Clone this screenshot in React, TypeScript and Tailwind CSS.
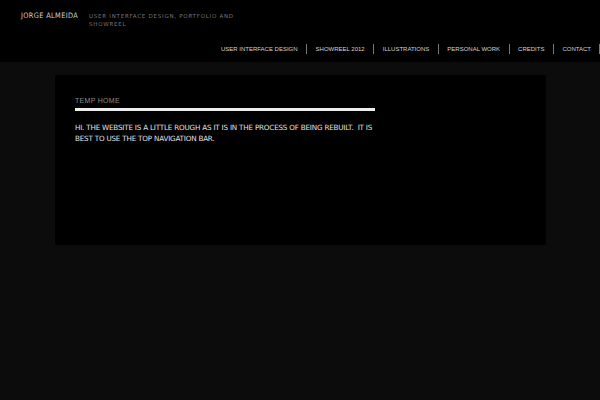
const navItems = [
  'USER INTERFACE DESIGN',
  'SHOWREEL 2012',
  'ILLUSTRATIONS',
  'PERSONAL WORK',
  'CREDITS',
  'CONTACT',
];

export default function App() {
  return (
    <div className="w-[600px] h-[400px] overflow-hidden bg-[#0c0c0c] font-['Liberation_Sans',sans-serif]">
      <header className="h-[62px] bg-black flex flex-col">
        <div className="flex pl-[21px] pt-[11px] gap-[14px]">
          <h1 className="text-[7.5px] leading-[10px] text-[#d0d0d0] tracking-[0.4px] whitespace-nowrap font-['DejaVu_Sans',sans-serif] scale-x-[0.88] origin-left w-[54px]">
            JORGE ALMEIDA
          </h1>
          <p className="text-[5.5px] leading-[8px] pt-[1px] text-[#777] tracking-[0.75px] w-[150px] font-['DejaVu_Sans',sans-serif]">
            USER INTERFACE DESIGN, PORTFOLIO AND SHOWREEL
          </p>
        </div>
        <nav className="flex justify-end items-center mt-auto mb-[8px]">
          {navItems.map((item, i) => (
            <div key={item} className="flex items-center">
              {i > 0 && <span className="w-px h-[10px] bg-[#777] mx-[8.5px]" />}
              <a className="text-[6px] leading-[10px] text-[#d4d4d4] whitespace-nowrap">{item}</a>
            </div>
          ))}
          <span className="w-px h-[10px] bg-[#777] ml-[8px]" />
        </nav>
      </header>
      <main className="pt-[13px] px-[55px]">
        <section className="bg-black h-[170px] w-[491px] rounded-[2px] pt-[21px] px-[20px]">
          <h2 className="text-[7px] leading-[10px] text-[#8a8a8a] tracking-[0.3px]">TEMP HOME</h2>
          <div className="w-[300px] h-[3px] bg-[#eee] mt-[2px]" />
          <p className="w-[305px] mt-[11px] text-[7.2px] leading-[11px] text-[#e2e2e2] tracking-[-0.2px] font-['DejaVu_Sans',sans-serif]">
            HI. THE WEBSITE IS A LITTLE ROUGH AS IT IS IN THE PROCESS OF BEING REBUILT.&nbsp; IT IS BEST TO USE THE TOP NAVIGATION BAR.
          </p>
        </section>
      </main>
    </div>
  );
}
